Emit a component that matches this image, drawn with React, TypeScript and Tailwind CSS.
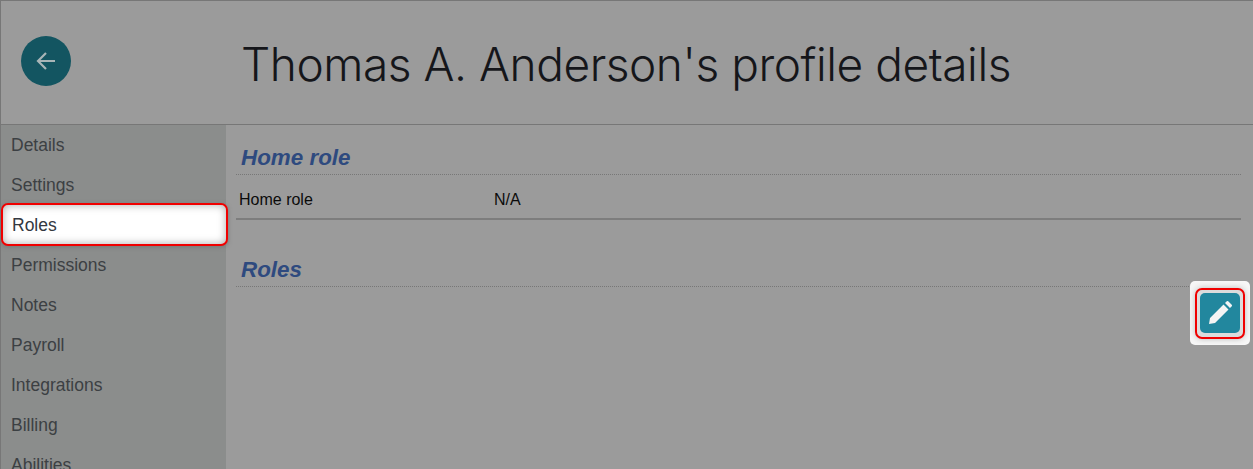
import React from 'react'

const menuItems = ['Details', 'Settings', 'Roles', 'Permissions', 'Notes', 'Payroll', 'Integrations', 'Billing', 'Abilities']

const SectionTitle = ({ title }: { title: string }) => (
   <h2 className="h-[30px] border-b border-dotted border-[#777777] pl-[5px] text-[22.4px] font-bold italic leading-[26px] text-[#2e4a7f]">
      {title}
   </h2>
)

const App = () => {
   return (
      <div className="relative h-[469px] w-[1253px] overflow-hidden border-l border-t border-[#777777] bg-[#9b9b9b] font-['Liberation_Sans',sans-serif]">
         <header className="flex h-[124px] items-center border-b border-[#777777]">
            <button className="mb-1 ml-5 flex h-[50px] w-[50px] items-center justify-center rounded-full bg-[#135561]">
               <svg width="24" height="24" viewBox="0 0 24 24" fill="none" stroke="#a8b5b7" strokeWidth="2.2">
                  <path d="M21 12H4M12 4l-8 8 8 8" />
               </svg>
            </button>
            <h1 className="ml-[170px] mt-0.5 font-['Inter',sans-serif] text-[46px] font-light leading-none tracking-[-0.45px] text-[#15161a]">
               Thomas A. Anderson's profile details
            </h1>
         </header>
         <div className="flex">
            <nav className="h-[345px] w-[225px] shrink-0 bg-[#8b8d8c]">
               {menuItems.map((item) =>
                  item === 'Roles' ? (
                     <div key={item} className="relative h-10">
                        <div className="absolute -bottom-px left-0 right-[-2px] -top-0.5 flex items-center rounded-[7px] border-2 border-[#f00000] bg-white pl-[9px] pt-px text-[17.5px] text-[#333840] shadow-[inset_0_0_8px_#aaaaaa,0_1px_4px_#777777]">
                           {item}
                        </div>
                     </div>
                  ) : (
                     <div key={item} className="flex h-10 items-center pl-[10px] text-[17.5px] text-[#3c4043]">
                        {item}
                     </div>
                  ),
               )}
            </nav>
            <main className="flex-1 pl-[10px] pr-3 pt-5">
               <SectionTitle title="Home role" />
               <div className="flex h-[45px] items-center border-b-2 border-[#7d7d7d] pl-[3px] pt-[6px] text-base text-[#0b0b0b]">
                  <span className="w-[255px]">Home role</span>
                  <span>N/A</span>
               </div>
               <div className="mt-[37px]">
                  <SectionTitle title="Roles" />
               </div>
            </main>
         </div>
         <div className="absolute left-[1189px] top-[280px] flex h-[64px] w-[60px] items-center justify-center rounded-[5px] bg-[#f7f7f7]">
            <div className="flex h-[51px] w-[50px] items-center justify-center rounded-[7px] border-2 border-[#f00000] bg-[#dcdcdc] shadow-[0_0_6px_#bbbbbb]">
               <button className="flex h-10 w-10 items-center justify-center rounded-[5px] bg-[#22879e]">
                  <svg width="24" height="24" viewBox="0 0 24 24" fill="#f4f4f4">
                     <path d="M1 23l1-6L15.5 3.5l5 5L7 22zM17 2l1.5-1.5a1.4 1.4 0 0 1 2 0l3 3a1.4 1.4 0 0 1 0 2L22 7z" />
                  </svg>
               </button>
            </div>
         </div>
      </div>
   )
}

export default App
